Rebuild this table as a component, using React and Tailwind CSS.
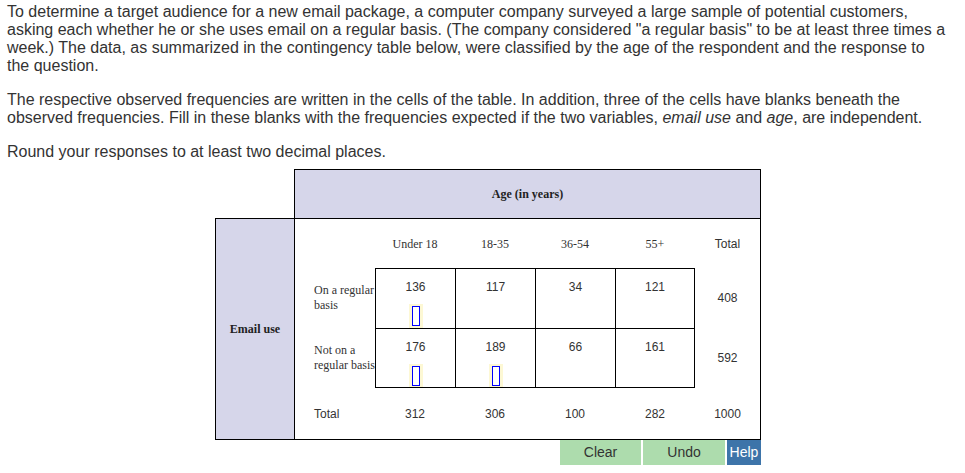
import React from 'react';

const cols = [ 'Under 18', '18-35', '36-54', '55+' ];

const rows = [
  { label: [ 'On a regular', 'basis' ], values: [ 136, 117, 34, 121 ], blanks: [ true, false, false, false ], total: 408 },
  { label: [ 'Not on a', 'regular basis' ], values: [ 176, 189, 66, 161 ], blanks: [ true, true, false, false ], total: 592 },
];

const colTotals = [ 312, 306, 100, 282 ];

function Blank() {
  return (
    <div className="mt-[8px] flex h-[24px] w-[14px] items-center justify-center bg-[#fdf8d4]">
      <div className="h-[20px] w-[8px] border border-[#0000ff] bg-white" />
    </div>
  );
}

export default function App() {
  return (
    <div className="bg-white text-[#333] font-['Liberation_Sans',Arial,sans-serif]">
      <div className="px-[7px] pt-[3px] text-[16px] leading-[18px] whitespace-nowrap">
        <p>
          To determine a target audience for a new email package, a computer company surveyed a large sample of potential customers,<br />
          asking each whether he or she uses email on a regular basis. (The company considered "a regular basis" to be at least three times a<br />
          week.) The data, as summarized in the contingency table below, were classified by the age of the respondent and the response to<br />
          the question.
        </p>
        <p className="mt-[16px]">
          The respective observed frequencies are written in the cells of the table. In addition, three of the cells have blanks beneath the<br />
          observed frequencies. Fill in these blanks with the frequencies expected if the two variables, <i>email use</i> and <i>age</i>, are independent.
        </p>
        <p className="mt-[16px]">Round your responses to at least two decimal places.</p>
      </div>

      <div className="ml-[215px] mt-[8px] w-[546px]">
        <div className="flex">
          <div className="w-[79px]" />
          <div className="flex h-[49px] w-[467px] items-center justify-center border border-b-0 border-black bg-[#d6d6ea] font-['Liberation_Serif',serif] text-[12px] font-bold text-[#222]">
            Age (in years)
          </div>
        </div>

        <div className="flex">
          <div className="flex h-[222px] w-[79px] items-center justify-center border border-r-0 border-black bg-[#d6d6ea] font-['Liberation_Serif',serif] text-[12px] font-bold text-[#222]">
            Email use
          </div>
          <div className="grid h-[222px] w-[467px] grid-cols-[80px_80px_80px_80px_80px_65px] grid-rows-[49px_60px_60px_51px] border border-black text-[12px]">
            <div />
            { cols.map( ( c ) => (
              <div key={ c } className="flex items-center justify-center font-['Liberation_Serif',serif] text-[#333]">{ c }</div>
            ) ) }
            <div className="flex items-center justify-center">Total</div>

            { rows.map( ( r, ri ) => (
              <React.Fragment key={ ri }>
                <div className="flex flex-col justify-center pl-[19px] font-['Liberation_Serif',serif] leading-[15px] whitespace-nowrap">
                  <span>{ r.label[ 0 ] }</span>
                  <span>{ r.label[ 1 ] }</span>
                </div>
                { r.values.map( ( v, ci ) => (
                  <div
                    key={ ci }
                    className={ `flex flex-col items-center border-black pt-[9px] ${ ri === 0 ? 'border-t' : 'border-t border-b' } border-l ${ ci === 3 ? 'border-r' : '' }` }
                  >
                    <span>{ v }</span>
                    { r.blanks[ ci ] && <Blank /> }
                  </div>
                ) ) }
                <div className="flex items-center justify-center">{ r.total }</div>
              </React.Fragment>
            ) ) }

            <div className="flex items-center pl-[19px]">Total</div>
            { colTotals.map( ( t, i ) => (
              <div key={ i } className="flex items-center justify-center">{ t }</div>
            ) ) }
            <div className="flex items-center justify-center">1000</div>
          </div>
        </div>

        <div className="flex justify-end text-[14px] text-[#333]">
          <button className="h-[25px] w-[82px] border-r border-white bg-[#addcad]">Clear</button>
          <button className="ml-[1px] h-[25px] w-[82px] bg-[#addcad]">Undo</button>
          <button className="ml-[2px] h-[25px] w-[34px] bg-[#3d74a9] text-white">Help</button>
        </div>
      </div>
    </div>
  );
}
